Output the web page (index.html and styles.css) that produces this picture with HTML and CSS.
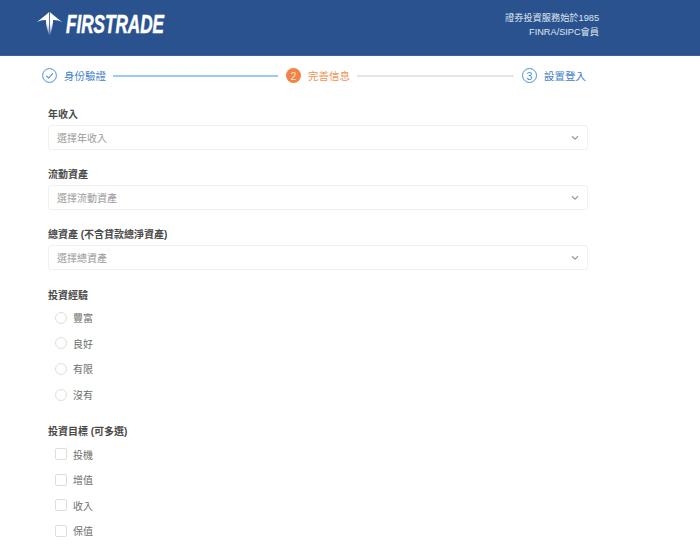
FILE: index.html
```html
<!DOCTYPE html>
<html lang="zh-Hant">
<head>
<meta charset="utf-8">
<title>Firstrade</title>
<link rel="stylesheet" href="styles.css">
</head>
<body>
<header class="top">
  <div class="brand">
    <svg class="mark" width="26" height="24" viewBox="0 0 26 24">
      <defs><linearGradient id="fade" x1="0" y1="0" x2="0" y2="1"><stop offset="0.5" stop-color="#fff"/><stop offset="1" stop-color="#fff" stop-opacity="0.25"/></linearGradient></defs>
      <path d="M0 10 L10 2 L10 8 Q4 7.5 0 10Z" fill="#fff"/>
      <path d="M25 10 L15 2 L15 8 Q21 7.5 25 10Z" fill="#fff"/>
      <path d="M12.1 0 L12.1 14 L12.3 23.5 Q8.8 15 8.8 6 L10 2Z" fill="url(#fade)"/>
      <path d="M12.9 0 L12.9 14 L12.7 23.5 Q16.2 15 16.2 6 L15 2Z" fill="url(#fade)"/>
    </svg>
    <span class="wordmark">FIRSTRADE</span>
  </div>
  <div class="tagline">
    <div>證券投資服務始於1985</div>
    <div>FINRA/SIPC會員</div>
  </div>
</header>
<nav class="steps">
  <div class="step done">
    <svg width="15" height="15" viewBox="0 0 15 15"><circle cx="7.5" cy="7.5" r="6.9" fill="none" stroke="#4a90d9" stroke-width="1"/><path d="M4.3 7.8 L6.7 10 L10.8 5.3" fill="none" stroke="#4a90d9" stroke-width="1.1"/></svg>
    <span>身份驗證</span>
  </div>
  <div class="line line-done"></div>
  <div class="step current"><i class="num num-fill">2</i><span>完善信息</span></div>
  <div class="line line-todo"></div>
  <div class="step todo"><i class="num num-outline">3</i><span>設置登入</span></div>
</nav>
<main class="form">
  <section class="field">
    <div class="label">年收入</div>
    <div class="select"><span>選擇年收入</span><svg class="chev" width="8" height="6" viewBox="0 0 8 6"><path d="M1 1.3 L4 4.2 L7 1.3" fill="none" stroke="#9a9ea4" stroke-width="1.3"/></svg></div>
  </section>
  <section class="field">
    <div class="label">流動資產</div>
    <div class="select"><span>選擇流動資產</span><svg class="chev" width="8" height="6" viewBox="0 0 8 6"><path d="M1 1.3 L4 4.2 L7 1.3" fill="none" stroke="#9a9ea4" stroke-width="1.3"/></svg></div>
  </section>
  <section class="field">
    <div class="label">總資產 (不含貸款總淨資產)</div>
    <div class="select"><span>選擇總資產</span><svg class="chev" width="8" height="6" viewBox="0 0 8 6"><path d="M1 1.3 L4 4.2 L7 1.3" fill="none" stroke="#9a9ea4" stroke-width="1.3"/></svg></div>
  </section>
  <section class="group exp">
    <div class="label">投資經驗</div>
    <div class="opt"><i class="radio"></i><span>豐富</span></div>
    <div class="opt"><i class="radio"></i><span>良好</span></div>
    <div class="opt"><i class="radio"></i><span>有限</span></div>
    <div class="opt"><i class="radio"></i><span>沒有</span></div>
  </section>
  <section class="group goal">
    <div class="label">投資目標 (可多選)</div>
    <div class="opt"><i class="check"></i><span>投機</span></div>
    <div class="opt"><i class="check"></i><span>增值</span></div>
    <div class="opt"><i class="check"></i><span>收入</span></div>
    <div class="opt"><i class="check"></i><span>保值</span></div>
  </section>
</main>
</body>
</html>
```
FILE: styles.css
```css
* { box-sizing: border-box; }
html, body { margin: 0; height: 551px; overflow: hidden; background: #fff; }
body { font-family: "Liberation Sans", "Noto Sans CJK TC", sans-serif; font-size: 10px; color: #555; }
.top { height: 56px; background: #2a528f; display: flex; justify-content: space-between; padding: 12px 101px 0 37px; border-bottom: 1px solid #3a619b; }
.brand { display: flex; align-items: flex-start; gap: 3px; }
.mark { display: block; }
.wordmark { font: italic 700 25px/24px "Liberation Sans", sans-serif; color: #fff; -webkit-text-stroke: 0.5px #fff; display: inline-block; transform: scaleX(0.685); transform-origin: left center; white-space: nowrap; }
.tagline { color: #dfe6f0; font-size: 9.2px; line-height: 13.5px; text-align: right; }
.steps { display: flex; align-items: center; height: 15px; margin: 12px 114px 0 42px; }
.step { display: flex; align-items: center; gap: 7px; font-size: 10.5px; white-space: nowrap; }
.done span, .todo span { color: #3f82c8; }
.current span { color: #f4914f; }
.line { height: 2px; background: #e6e6e6; margin: 0 8px 0 7px; }
.line-done { flex: 166 1 0; background: #9cc9f5; }
.line-todo { flex: 158 1 0; }
.num { width: 15px; height: 15px; border-radius: 50%; display: flex; align-items: center; justify-content: center; font-style: normal; font-size: 10.5px; }
.num-fill { background: #f08345; color: #fde6d6; }
.num-outline { border: 1px solid #4a90d9; color: #4a90d9; }
.form { padding: 0 112px 0 48px; }
.field { margin-top: 9px; height: 51px; }
.field:first-child { margin-top: 25px; }
.label { font-weight: 700; color: #4a4a4a; line-height: 14px; height: 14px; }
.select { margin-top: 3px; height: 25px; border: 1px solid #f0f1f3; border-radius: 3px; display: flex; align-items: center; justify-content: space-between; padding: 0 8px 0 8px; color: #9a9a9a; }
.chev { display: block; }
.group { display: flex; flex-direction: column; }
.exp { margin-top: 10px; }
.goal { margin-top: 18px; }
.opt { display: flex; align-items: center; gap: 6px; height: 25.6px; padding-left: 7px; color: #6e6e6e; }
.group .label { margin-bottom: 2px; }
.radio { width: 12px; height: 12px; border: 1px solid #dedede; border-radius: 50%; }
.check { width: 12px; height: 12px; border: 1px solid #dedede; border-radius: 2px; }
```
